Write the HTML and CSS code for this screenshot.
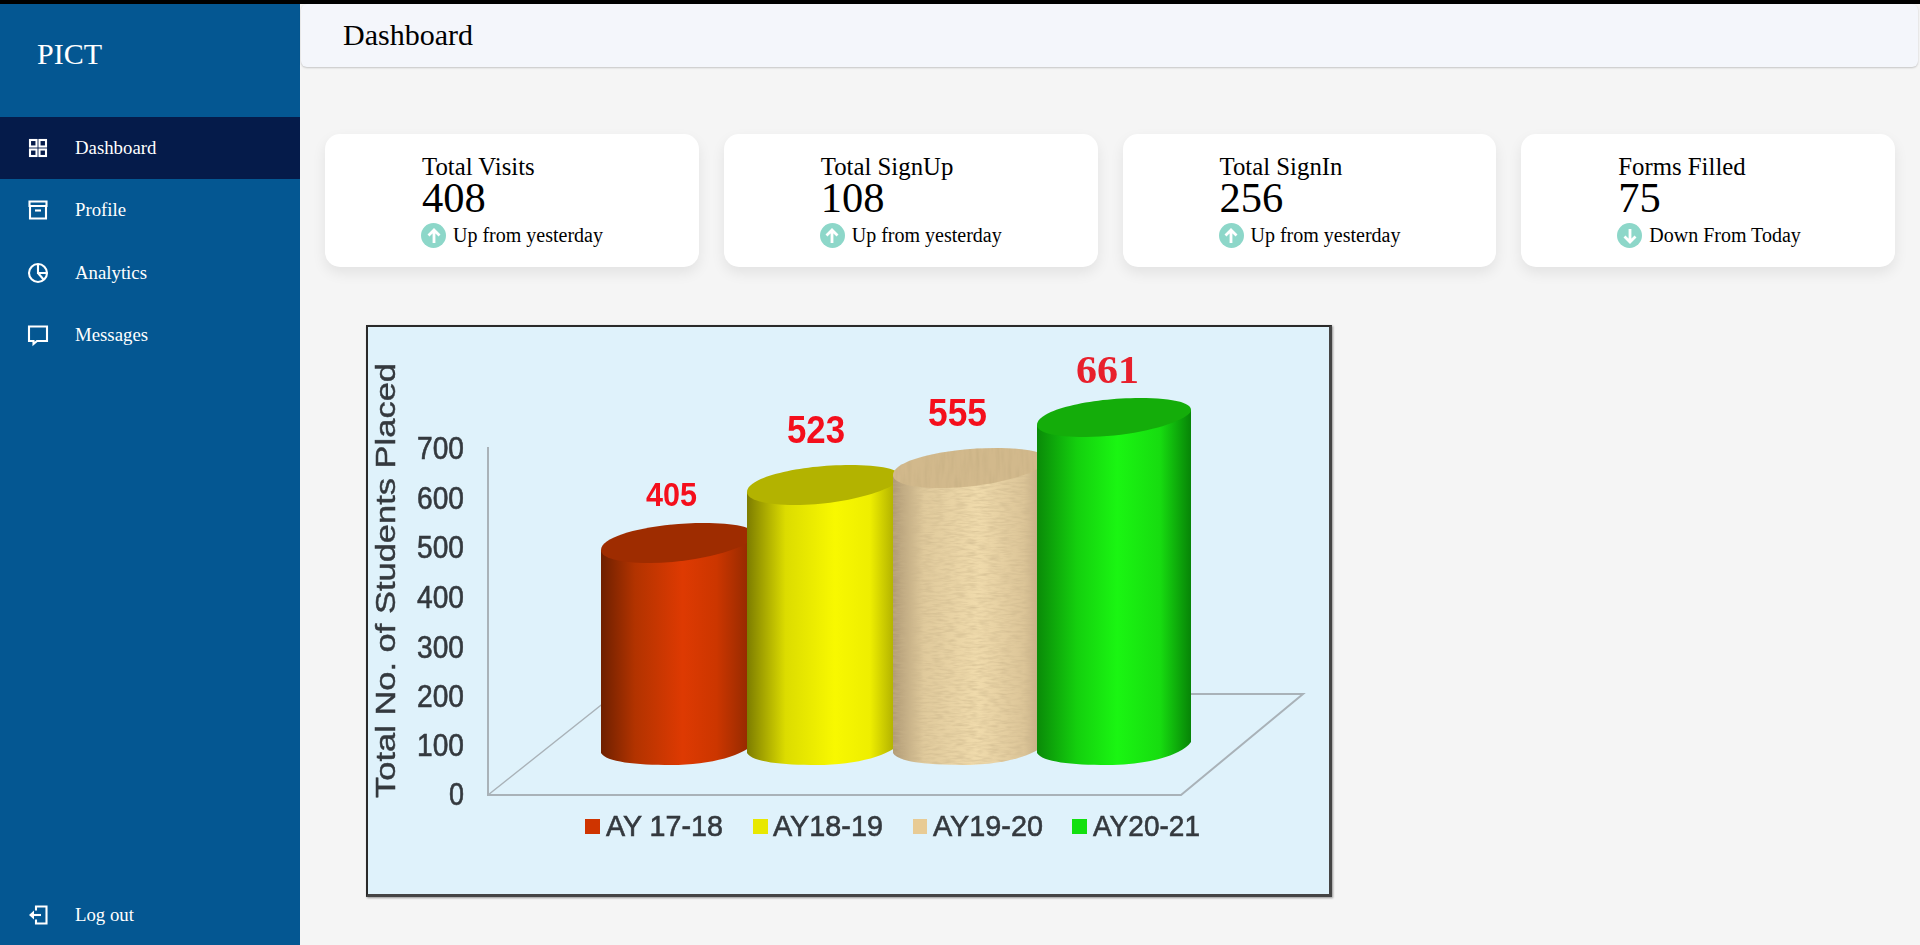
FILE: index.html
```html
<!DOCTYPE html>
<html lang="en">
<head>
  <meta charset="UTF-8">
  <title>Dashboard</title>
  <link rel="stylesheet" href="styles.css">
</head>
<body>

  <div class="top-strip"></div>

  <div class="app">
    <aside class="sidebar">
      <div class="logo">PICT</div>

      <nav class="menu">
        <a class="menu-item active" href="#">
          <svg class="menu-icon" viewBox="0 0 24 24"><rect x="4" y="4" width="6.5" height="6.5"/><rect x="13.5" y="4" width="6.5" height="6.5"/><rect x="4" y="13.5" width="6.5" height="6.5"/><rect x="13.5" y="13.5" width="6.5" height="6.5"/></svg>
          <span>Dashboard</span>
        </a>
        <a class="menu-item" href="#">
          <svg class="menu-icon" viewBox="0 0 24 24"><path d="M3.5 3.500h17v4.500h-17z"/><path d="M4 8v12.500h16V8"/><path d="M9 12.500h6"/></svg>
          <span>Profile</span>
        </a>
        <a class="menu-item" href="#">
          <svg class="menu-icon" viewBox="0 0 24 24"><circle cx="12" cy="12" r="9"/><path d="M12 3v9h9"/><path d="M12 12l6 7"/></svg>
          <span>Analytics</span>
        </a>
        <a class="menu-item" href="#">
          <svg class="menu-icon" viewBox="0 0 24 24"><path d="M3 3.500h18v14.500H11l-3.500 3v-3H3z"/></svg>
          <span>Messages</span>
        </a>
      </nav>

      <a class="menu-item logout" href="#">
        <svg class="menu-icon" viewBox="0 0 24 24"><path d="M10 7.500v-4h10.500v17H10v-4"/><path d="M15 12H6"/><path class="solid" d="M8 7.500v9L3 12z"/></svg>
        <span>Log out</span>
      </a>
    </aside>

    <main class="main">
      <header class="topbar">Dashboard</header>

      <section class="cards">
        <div class="card">
          <div class="card-title">Total Visits</div>
          <div class="card-number">408</div>
          <div class="card-trend">
            <span class="trend-icon"><svg viewBox="0 0 24 24"><path d="M12 19V6M6.500 11.500L12 6l5.500 5.500"/></svg></span>
            Up from yesterday
          </div>
        </div>
        <div class="card">
          <div class="card-title">Total SignUp</div>
          <div class="card-number">108</div>
          <div class="card-trend">
            <span class="trend-icon"><svg viewBox="0 0 24 24"><path d="M12 19V6M6.500 11.500L12 6l5.500 5.500"/></svg></span>
            Up from yesterday
          </div>
        </div>
        <div class="card">
          <div class="card-title">Total SignIn</div>
          <div class="card-number">256</div>
          <div class="card-trend">
            <span class="trend-icon"><svg viewBox="0 0 24 24"><path d="M12 19V6M6.500 11.500L12 6l5.500 5.500"/></svg></span>
            Up from yesterday
          </div>
        </div>
        <div class="card">
          <div class="card-title">Forms Filled</div>
          <div class="card-number">75</div>
          <div class="card-trend">
            <span class="trend-icon"><svg viewBox="0 0 24 24"><path d="M12 5v13M6.500 12.500L12 18l5.500-5.500"/></svg></span>
            Down From Today
          </div>
        </div>
      </section>

      <!-- placement chart, coordinates in the viewBox are page pixels -->
      <svg class="chart" viewBox="368 327 961 567">
        <defs>
          <linearGradient id="redBody">
            <stop offset="0" stop-color="#6e2000"/>
            <stop offset=".22" stop-color="#b23300"/>
            <stop offset=".53" stop-color="#de3a02"/>
            <stop offset=".75" stop-color="#cc3600"/>
            <stop offset="1" stop-color="#8a2800"/>
          </linearGradient>
          <linearGradient id="yellowBody">
            <stop offset="0" stop-color="#7d7d00"/>
            <stop offset=".25" stop-color="#dcdc00"/>
            <stop offset=".57" stop-color="#f8f800"/>
            <stop offset=".8" stop-color="#eeee00"/>
            <stop offset="1" stop-color="#a0a000"/>
          </linearGradient>
          <linearGradient id="tanBody">
            <stop offset="0" stop-color="#b09a75"/>
            <stop offset=".2" stop-color="#e0ca9c"/>
            <stop offset=".55" stop-color="#f0dbac"/>
            <stop offset=".85" stop-color="#dcc598"/>
            <stop offset="1" stop-color="#b8a27c"/>
          </linearGradient>
          <linearGradient id="greenBody">
            <stop offset="0" stop-color="#0a8a08"/>
            <stop offset=".26" stop-color="#14d00e"/>
            <stop offset=".52" stop-color="#1af612"/>
            <stop offset=".8" stop-color="#17dc10"/>
            <stop offset="1" stop-color="#078407"/>
          </linearGradient>
          <!-- wood grain for the tan cylinder -->
          <filter id="grain" x="0" y="0" width="100%" height="100%">
            <feTurbulence type="fractalNoise" baseFrequency="0.09 0.45" numOctaves="2" seed="4"/>
            <feColorMatrix values="0 0 0 0 .58  0 0 0 0 .45  0 0 0 0 .25  1.1 0 0 0 -.42"/>
            <feComposite in2="SourceAlpha" operator="in"/>
          </filter>
          <filter id="grainTop" x="0" y="0" width="100%" height="100%">
            <feTurbulence type="fractalNoise" baseFrequency="0.25 0.04" numOctaves="2" seed="9"/>
            <feColorMatrix values="0 0 0 0 .55  0 0 0 0 .42  0 0 0 0 .22  1.1 0 0 0 -.42"/>
            <feComposite in2="SourceAlpha" operator="in"/>
          </filter>
        </defs>

        <g class="chart-art">
          <path class="axis" d="M488 447V795H1181L1303 694H1190"/>
          <path class="axis thin" d="M488 795L610 698"/>

          <path d="M601 550V753C606 762 636 765 671 765C711 765 746 755 755 742V535Z" fill="url(#redBody)"/>
          <path d="M601 550C601 535 654 523 704 523C734 523 755 527 755 535C755 545 704 563 649 563C619 563 601 558 601 550Z" fill="#9e2c00"/>

          <path d="M747 492V753C752 762 782 765 817 765C857 765 892 755 901 742V477Z" fill="url(#yellowBody)"/>
          <path d="M747 492C747 477 800 465 850 465C880 465 901 469 901 477C901 487 850 505 795 505C765 505 747 500 747 492Z" fill="#b3b300"/>

          <path d="M893 475V753C898 762 928 765 963 765C1003 765 1038 755 1047 742V460Z" fill="url(#tanBody)"/>
          <path d="M893 475V753C898 762 928 765 963 765C1003 765 1038 755 1047 742V460Z" filter="url(#grain)"/>
          <path d="M893 475C893 460 946 448 996 448C1026 448 1047 452 1047 460C1047 470 996 488 941 488C911 488 893 483 893 475Z" fill="#d2b98c"/>
          <path d="M893 475C893 460 946 448 996 448C1026 448 1047 452 1047 460C1047 470 996 488 941 488C911 488 893 483 893 475Z" filter="url(#grainTop)"/>

          <path d="M1037 425V753C1042 762 1072 765 1107 765C1147 765 1182 755 1191 742V410Z" fill="url(#greenBody)"/>
          <path d="M1037 425C1037 410 1090 398 1140 398C1170 398 1191 402 1191 410C1191 420 1140 437 1085 437C1055 437 1037 433 1037 425Z" fill="#14ad0a"/>

          <text class="tick" x="417" y="459" textLength="47" lengthAdjust="spacingAndGlyphs">700</text>
          <text class="tick" x="417" y="509" textLength="47" lengthAdjust="spacingAndGlyphs">600</text>
          <text class="tick" x="417" y="558" textLength="47" lengthAdjust="spacingAndGlyphs">500</text>
          <text class="tick" x="417" y="608" textLength="47" lengthAdjust="spacingAndGlyphs">400</text>
          <text class="tick" x="417" y="658" textLength="47" lengthAdjust="spacingAndGlyphs">300</text>
          <text class="tick" x="417" y="707" textLength="47" lengthAdjust="spacingAndGlyphs">200</text>
          <text class="tick" x="417" y="756" textLength="47" lengthAdjust="spacingAndGlyphs">100</text>
          <text class="tick" x="449" y="805" textLength="15" lengthAdjust="spacingAndGlyphs">0</text>

          <text class="axis-title" transform="translate(395 798) rotate(-90)" textLength="435" lengthAdjust="spacingAndGlyphs">Total No. of Students Placed</text>

          <text class="value small" x="646" y="506" textLength="51" lengthAdjust="spacingAndGlyphs">405</text>
          <text class="value" x="787" y="443" textLength="58" lengthAdjust="spacingAndGlyphs">523</text>
          <text class="value" x="928" y="426" textLength="59" lengthAdjust="spacingAndGlyphs">555</text>
          <text class="value serif" x="1076" y="383" textLength="63" lengthAdjust="spacingAndGlyphs">661</text>

          <rect x="585" y="819" width="15" height="15" fill="#cf3400"/>
          <text class="legend" x="606" y="836" textLength="117" lengthAdjust="spacingAndGlyphs">AY 17-18</text>
          <rect x="753" y="819" width="15" height="15" fill="#e8e800"/>
          <text class="legend" x="773" y="836" textLength="110" lengthAdjust="spacingAndGlyphs">AY18-19</text>
          <rect x="913" y="819" width="14" height="15" fill="#e8cb94"/>
          <text class="legend" x="933" y="836" textLength="110" lengthAdjust="spacingAndGlyphs">AY19-20</text>
          <rect x="1072" y="819" width="15" height="15" fill="#12e00e"/>
          <text class="legend" x="1093" y="836" textLength="107" lengthAdjust="spacingAndGlyphs">AY20-21</text>
        </g>
      </svg>
    </main>
  </div>

</body>
</html>
```

FILE: styles.css
```css
* {
  box-sizing: border-box;
}
html, body {
  height: 100%;
}
body {
  margin: 0;
  font-family: "Liberation Serif", "Times New Roman", serif;
  background: #f5f5f5;
  color: #000;
  display: flex;
  flex-direction: column;
  overflow: hidden;
}

.top-strip {
  height: 4px;
  background: #000;
  flex-shrink: 0;
}
.app {
  flex: 1;
  display: flex;
  min-height: 0;
}

/* sidebar */
.sidebar {
  width: 300px;
  flex-shrink: 0;
  background: #045792;
  display: flex;
  flex-direction: column;
}
.logo {
  height: 113px;
  padding: 28px 0 0 37px;
  font-size: 30px;
  line-height: 44px;
  color: #fff;
}
.menu {
  display: flex;
  flex-direction: column;
}
.menu-item {
  height: 62.3px;
  display: flex;
  align-items: center;
  gap: 25px;
  padding-left: 26px;
  font-size: 18.8px;
  color: #fff;
  text-decoration: none;
}
.menu-item.active {
  background: #051b4a;
}
.logout {
  margin-top: auto;
  height: 60px;
}
.menu-icon {
  width: 24px;
  height: 24px;
  fill: none;
  stroke: #fff;
  stroke-width: 2.1;
}
.menu-icon .solid {
  fill: #fff;
  stroke: none;
}

/* main */
.main {
  flex: 1;
  min-width: 0;
}
.topbar {
  height: 63px;
  margin: 0 2px 0 1px;
  padding-left: 42px;
  background: #f4f6fb;
  border-radius: 6px;
  box-shadow: 0 1px 2px rgba(0,0,0,0.2);
  font-size: 30px;
  line-height: 61px;
}

.cards {
  display: grid;
  grid-template-columns: repeat(4, 1fr);
  gap: 25px;
  margin: 67px 25px 0;
}
.card {
  height: 133px;
  padding: 20px 0 0 96px;
  background: #fff;
  border-radius: 15px;
  box-shadow: 0 6px 14px rgba(0,0,0,0.08);
}
.card-title {
  margin-left: 1px;
  font-size: 24.8px;
  line-height: 26px;
}
.card-number {
  margin-left: 1px;
  font-size: 42.5px;
  line-height: 36px;
}
.card-trend {
  display: flex;
  align-items: center;
  gap: 7px;
  margin-top: 7px;
  font-size: 20px;
  line-height: 25px;
}
.trend-icon {
  width: 25px;
  height: 25px;
  border-radius: 50%;
  background: #8dd7c9;
  display: flex;
  align-items: center;
  justify-content: center;
}
.trend-icon svg {
  width: 24px;
  height: 24px;
  fill: none;
  stroke: #fff;
  stroke-width: 2.8;
}

/* chart */
.chart {
  display: block;
  width: 966px;
  height: 572px;
  margin: 58px 0 0 66px;
  background: #dff2fb;
  border: 2px solid #2a2a2a;
  border-right: 3px solid #444;
  border-bottom: 3px solid #444;
  box-shadow: 1px 1px 2px rgba(0,0,0,0.4);
}
.chart-art {
  filter: blur(0.7px);
}
.axis {
  fill: none;
  stroke: #a9b2b8;
  stroke-width: 2;
}
.axis.thin {
  stroke-width: 1.5;
}
.tick, .legend, .axis-title {
  font-family: "Liberation Sans", Arial, sans-serif;
  fill: #34393e;
  stroke: #34393e;
  stroke-width: 0.6;
}
.tick {
  font-size: 31px;
}
.axis-title {
  font-size: 27px;
  stroke-width: 0.4;
}
.legend {
  font-size: 30px;
}
.value {
  font-family: "Liberation Sans", Arial, sans-serif;
  font-weight: bold;
  font-size: 39px;
  fill: #f40f1c;
}
.value.small {
  font-size: 33px;
}
.value.serif {
  font-family: "Liberation Serif", "Times New Roman", serif;
  font-size: 41px;
  fill: #e8202c;
}
```
